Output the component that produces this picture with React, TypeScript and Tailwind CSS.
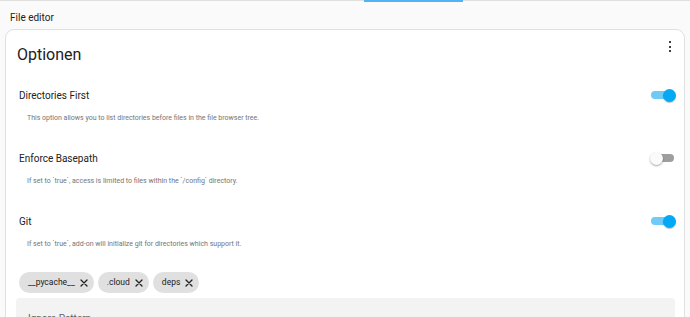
import React, { useState } from 'react'

interface OptionRow {
  id: string
  title: string
  description: string
  enabled: boolean
}

const options: OptionRow[] = [
  {
    id: 'dirsfirst',
    title: 'Directories First',
    description: 'This option allows you to list directories before files in the file browser tree.',
    enabled: true,
  },
  {
    id: 'enforce_basepath',
    title: 'Enforce Basepath',
    description: "If set to `true`, access is limited to files within the `/config` directory.",
    enabled: false,
  },
  {
    id: 'git',
    title: 'Git',
    description: 'If set to `true`, add-on will initialize git for directories which support it.',
    enabled: true,
  },
]

const ignored = ['__pycache__', '.cloud', 'deps']

const Toggle: React.FC<{ on: boolean; onClick: () => void }> = ({ on, onClick }) => (
  <button onClick={onClick} className="relative w-[26px] h-[13px] shrink-0" aria-pressed={on}>
    <span
      className={`absolute left-[1px] right-[2px] top-[2.5px] h-[8px] rounded-full ${on ? 'bg-[#6ecbf6]' : 'bg-[#9e9e9e]'}`}
    />
    <span
      className={`absolute top-0 w-[13px] h-[13px] rounded-full ${
        on ? 'right-0 bg-[#03a9f4] shadow-[0_1px_1px_rgba(0,0,0,0.25)]' : 'left-0 bg-[#fafafa] shadow-[0_1px_2px_rgba(0,0,0,0.35)]'
      }`}
    />
  </button>
)

const CloseIcon = () => (
  <svg width="8" height="8" viewBox="0 0 8 8" className="shrink-0">
    <path d="M1 1L7 7M7 1L1 7" stroke="#212121" strokeWidth="1.3" strokeLinecap="round" />
  </svg>
)

export default function App() {
  const [state, setState] = useState<Record<string, boolean>>(
    Object.fromEntries(options.map((o) => [o.id, o.enabled]))
  )

  return (
    <div className="min-h-screen bg-[#fafafa] font-['Roboto',sans-serif] text-[#212121]">
      {/* tab indicator line */}
      <div className="flex h-[2px]">
        <div className="w-[364px] h-px bg-[#e0e0e0]" />
        <div className="w-[99px] h-[2px] bg-[#4fb3f6]" />
        <div className="flex-1 h-px bg-[#e0e0e0]" />
      </div>

      <div className="h-[27px] flex items-center pl-[10px] pt-[3px] text-[10px]">File editor</div>

      <div className="mx-[5px] bg-white border border-[#e0e0e0] rounded-[9px] overflow-hidden">
        {/* card header */}
        <div className="flex justify-between items-start pl-[11px] pr-[13px] pt-[15px]">
          <h1 className="text-[16px] leading-[20px]">Optionen</h1>
          <div className="flex flex-col items-center gap-[2.5px] mt-[-4px]">
            <span className="w-[2px] h-[2px] bg-black rounded-full" />
            <span className="w-[2px] h-[2px] bg-black rounded-full" />
            <span className="w-[2px] h-[2px] bg-black rounded-full" />
          </div>
        </div>

        <div className="mt-[22px] pl-[12px] pr-[8px]">
          {options.map((o) => (
            <div key={o.id} className="h-[63px]">
              <div className="flex justify-between items-center h-[16px]">
                <span className="text-[10px] pl-[1px]">{o.title}</span>
                <Toggle on={state[o.id]} onClick={() => setState({ ...state, [o.id]: !state[o.id] })} />
              </div>
              <p className="mt-[10px] h-[10px] leading-[10px] pl-[9px] text-[7px] text-[#757575]">{o.description}</p>
            </div>
          ))}
        </div>

        <div className="flex gap-[4px] pl-[13px] mt-[-4px]">
          {ignored.map((tag) => (
            <span
              key={tag}
              className="h-[21px] flex items-center gap-[5px] pl-[9px] pr-[6px] rounded-full bg-[#e0e0e0] text-[8.5px]"
            >
              {tag}
              <CloseIcon />
            </span>
          ))}
        </div>

        <div className="mt-[5px] ml-[10px] mr-[9px] h-[40px] bg-[#f3f3f3] rounded-t-[4px] flex justify-between items-start pl-[12px] pr-[12px] pt-[13px]">
          <span className="text-[10px] text-[#616161]">Ignore Pattern</span>
          <span className="mt-[6px] w-0 h-0 border-l-[4px] border-r-[4px] border-t-[4px] border-l-transparent border-r-transparent border-t-[#616161]" />
        </div>
      </div>
    </div>
  )
}
